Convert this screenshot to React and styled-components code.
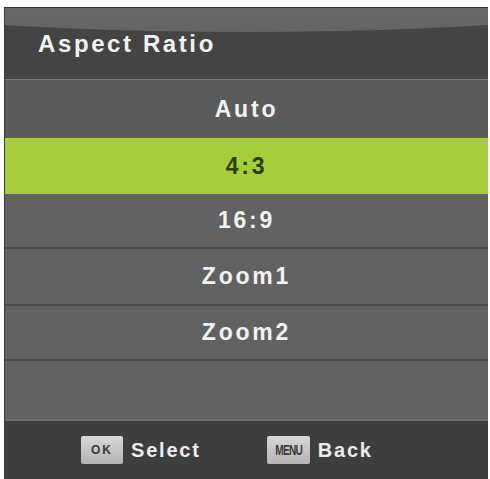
import React from "react";
import styled, { createGlobalStyle } from "styled-components";

const GlobalStyle = createGlobalStyle`
  html, body {
    margin: 0;
    padding: 0;
    background: #ffffff;
  }
  body {
    font-family: "Liberation Sans", Arial, sans-serif;
  }
`;

const Page = styled.div`
  width: 490px;
  height: 479px;
  padding: 7px 2px 0 4px;
  box-sizing: border-box;
  overflow: hidden;
`;

const Panel = styled.div`
  height: 472px;
  display: flex;
  flex-direction: column;
  background: #616161;
  border-top: 1px solid #2f2f2f;
  border-left: 1px solid #3a3a3a;
  box-shadow: inset -1px 0 0 #8a8a8a;
  box-sizing: border-box;
`;

// title bar with the glossy curved highlight on top
const Header = styled.div`
  position: relative;
  height: 71px;
  display: flex;
  align-items: center;
  padding: 0 0 0 33px;
  background: #444444;
  border-bottom: 1px solid #7a7a7a;
  overflow: hidden;
  flex-shrink: 0;

  &::before {
    content: "";
    position: absolute;
    left: -140%;
    top: -376px;
    width: 380%;
    height: 400px;
    border-radius: 50%;
    background: linear-gradient(#6e6e6e 88%, #646464);
  }
`;

const Title = styled.h1`
  position: relative;
  margin: 0;
  font-size: 24px;
  font-weight: bold;
  letter-spacing: 2.6px;
  color: #f2f2f2;
`;

const List = styled.div`
  display: flex;
  flex-direction: column;
  flex-shrink: 0;
`;

const Row = styled.div`
  height: ${(p) => p.h}px;
  box-sizing: border-box;
  display: flex;
  align-items: center;
  justify-content: center;
  font-size: 23px;
  font-weight: bold;
  letter-spacing: 2.8px;
  color: ${(p) => (p.active ? "#2c3d0e" : "#f2f2f2")};
  background: ${(p) => (p.active ? "#a5cd3c" : p.tint || "#626262")};
  border-bottom: ${(p) => (p.divider ? "2px solid #4a4a4a" : "none")};
  box-shadow: ${(p) => (p.divider ? "0 1px 0 #707070" : "none")};
`;

const Footer = styled.div`
  flex: 1;
  display: flex;
  align-items: center;
  padding-left: 76px;
  gap: 66px;
  background: #3e3e3e;
  border-top: 2px solid #6e6e6e;
`;

const Hint = styled.div`
  display: flex;
  align-items: center;
  gap: 8px;
  font-size: 20px;
  font-weight: bold;
  letter-spacing: 1.8px;
  color: #ececec;
`;

const Key = styled.span`
  display: inline-flex;
  align-items: center;
  justify-content: center;
  width: ${(p) => p.w}px;
  height: 28px;
  border-radius: 2px;
  background: linear-gradient(#d8d8d8, #b4b4b4);
  color: #3a3a3a;
  font-size: ${(p) => p.fs}px;
  font-weight: bold;
  letter-spacing: ${(p) => p.ls}px;
`;

const Squeeze = styled.span`
  display: inline-block;
  transform: scaleX(0.72);
`;

const items = [
  { label: "Auto", tint: "#5b5b5b", h: 58 },
  { label: "4:3", active: true, h: 56 },
  { label: "16:9", divider: true, h: 55 },
  { label: "Zoom1", divider: true, h: 57 },
  { label: "Zoom2", divider: true, h: 55 },
  { label: "", h: 58 },
];

export default function App() {
  return (
    <>
      <GlobalStyle />
      <Page>
        <Panel>
          <Header>
            <Title>Aspect Ratio</Title>
          </Header>
          <List>
            {items.map((it, i) => (
              <Row key={i} h={it.h} active={it.active} tint={it.tint} divider={it.divider}>
                {it.label}
              </Row>
            ))}
          </List>
          <Footer>
            <Hint>
              <Key w={42} fs={12} ls={2}>OK</Key>
              Select
            </Hint>
            <Hint>
              <Key w={43} fs={14} ls={-1}>
                <Squeeze>MENU</Squeeze>
              </Key>
              Back
            </Hint>
          </Footer>
        </Panel>
      </Page>
    </>
  );
}
